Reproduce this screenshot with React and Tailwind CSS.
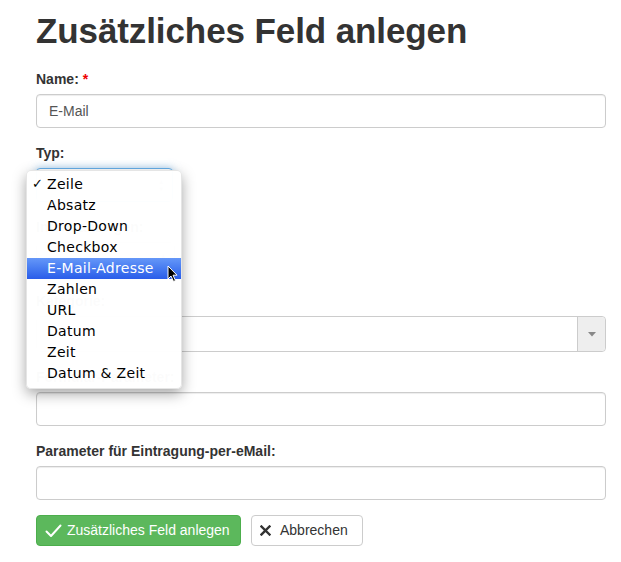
import React from "react";

const font = { fontFamily: '"Liberation Sans", Arial, sans-serif' };
const menuFont = { fontFamily: '"DejaVu Sans", "Lucida Grande", sans-serif' };

function Label({ children }) {
  return (
    <div className="text-[14px] leading-[20px] font-bold text-[#333] mb-[5px]">{children}</div>
  );
}

function Input({ value }) {
  return (
    <div className="h-[34px] w-full rounded-[4px] border border-[#ccc] bg-white px-[12px] flex items-center text-[14px] text-[#555] shadow-[inset_0_1px_1px_rgba(0,0,0,0.075)]">
      {value}
    </div>
  );
}

const items = [
  "Zeile",
  "Absatz",
  "Drop-Down",
  "Checkbox",
  "E-Mail-Adresse",
  "Zahlen",
  "URL",
  "Datum",
  "Zeit",
  "Datum & Zeit",
];

export default function App() {
  return (
    <div className="relative w-[621px] h-[562px] bg-white overflow-hidden" style={font}>
      <div className="pl-[36px] pr-[15px] pt-[11px]">
        <h1 className="text-[35px] leading-[40px] font-bold text-[#333] tracking-[-0.1px] mb-[18px]">
          Zusätzliches Feld anlegen
        </h1>

        <div className="mb-[15px]">
          <Label>
            Name: <span className="text-[#e00]">*</span>
          </Label>
          <Input value="E-Mail" />
        </div>

        <div className="mb-[15px]">
          <Label>Typ:</Label>
          <div className="h-[34px] w-[137px] rounded-[4px] border border-[#66afe9] shadow-[0_0_8px_rgba(102,175,233,0.6)] bg-white flex items-center justify-end pr-[8px] text-[14px]">
            <span className="text-[9px] leading-[8px] text-[#999] flex flex-col items-center">
              <span>▴</span>
              <span>▾</span>
            </span>
          </div>
        </div>

        <div className="mb-[15px]">
          <Label>Intern anzeigen:</Label>
          <div className="h-[34px] w-[139px] rounded-[4px] border border-[#ccc] bg-white flex items-center justify-end pr-[8px]">
            <span className="text-[9px] leading-[8px] text-[#999] flex flex-col items-center">
              <span>▴</span>
              <span>▾</span>
            </span>
          </div>
        </div>

        <div className="mb-[15px]">
          <Label>Kategorie:</Label>
          <div className="h-[36px] w-full rounded-[4px] border border-[#ccc] bg-white flex">
            <div className="flex-1" />
            <div className="w-[28px] bg-[#eee] border-l border-[#ccc] rounded-r-[4px] flex items-center justify-center">
              <svg width="8" height="5" viewBox="0 0 8 5">
                <path d="M0 0 L8 0 L4 4.5 Z" fill="#888" />
              </svg>
            </div>
          </div>
        </div>

        <div className="mb-[15px]">
          <Label>Formular-Parameter:</Label>
          <Input value="" />
        </div>

        <div className="mb-[15px]">
          <Label>Parameter für Eintragung-per-eMail:</Label>
          <Input value="" />
        </div>

        <div className="flex gap-[10px]">
          <div className="h-[31px] w-[205px] rounded-[4px] border border-[#4cae4c] bg-[#5cb85c] text-white text-[14px] flex items-center pl-[8px] gap-[5px]">
            <svg width="17" height="14" viewBox="0 0 17 14">
              <path d="M1.5 7.5 L6 12 L15.5 1.5" fill="none" stroke="#fff" strokeWidth="2" strokeLinecap="round" strokeLinejoin="round" />
            </svg>
            <span>Zusätzliches Feld anlegen</span>
          </div>
          <div className="h-[31px] w-[112px] rounded-[4px] border border-[#ccc] bg-white text-[#333] text-[14px] flex items-center pl-[8px] gap-[9px]">
            <svg width="11" height="11" viewBox="0 0 11 11">
              <path d="M1.5 1.5 L9.5 9.5 M9.5 1.5 L1.5 9.5" stroke="#333" strokeWidth="2.4" strokeLinecap="square" />
            </svg>
            <span>Abbrechen</span>
          </div>
        </div>
      </div>

      {/* native select popup menu */}
      <div
        className="absolute left-[26px] top-[170px] w-[156px] rounded-[5px] bg-white/[0.985] border border-black/10 shadow-[0_5px_14px_rgba(0,0,0,0.35)] pt-[3px] pb-[4px]"
        style={menuFont}
      >
        {items.map((it, i) => {
          const active = i === 4;
          return (
            <div
              key={it}
              className={
                "relative h-[21px] leading-[20px] pl-[20px] text-[14px] tracking-[0.3px] " +
                (active
                  ? "bg-gradient-to-b from-[#6597f8] to-[#2a5ce9] text-white"
                  : "text-black")
              }
            >
              {i === 0 && (
                <span className="absolute left-[5px] top-0 text-[13px]">✓</span>
              )}
              {it}
              {active && (
                <svg
                  className="absolute left-[140px] top-[7px]"
                  width="11"
                  height="18"
                  viewBox="0 0 11 18"
                >
                  <path
                    d="M1 1 L1 14 L4 11 L6.5 16.5 L8.5 15.5 L6 10.2 L10 10.2 Z"
                    fill="#000"
                    stroke="#fff"
                    strokeWidth="1"
                    strokeLinejoin="round"
                  />
                </svg>
              )}
            </div>
          );
        })}
      </div>
    </div>
  );
}
